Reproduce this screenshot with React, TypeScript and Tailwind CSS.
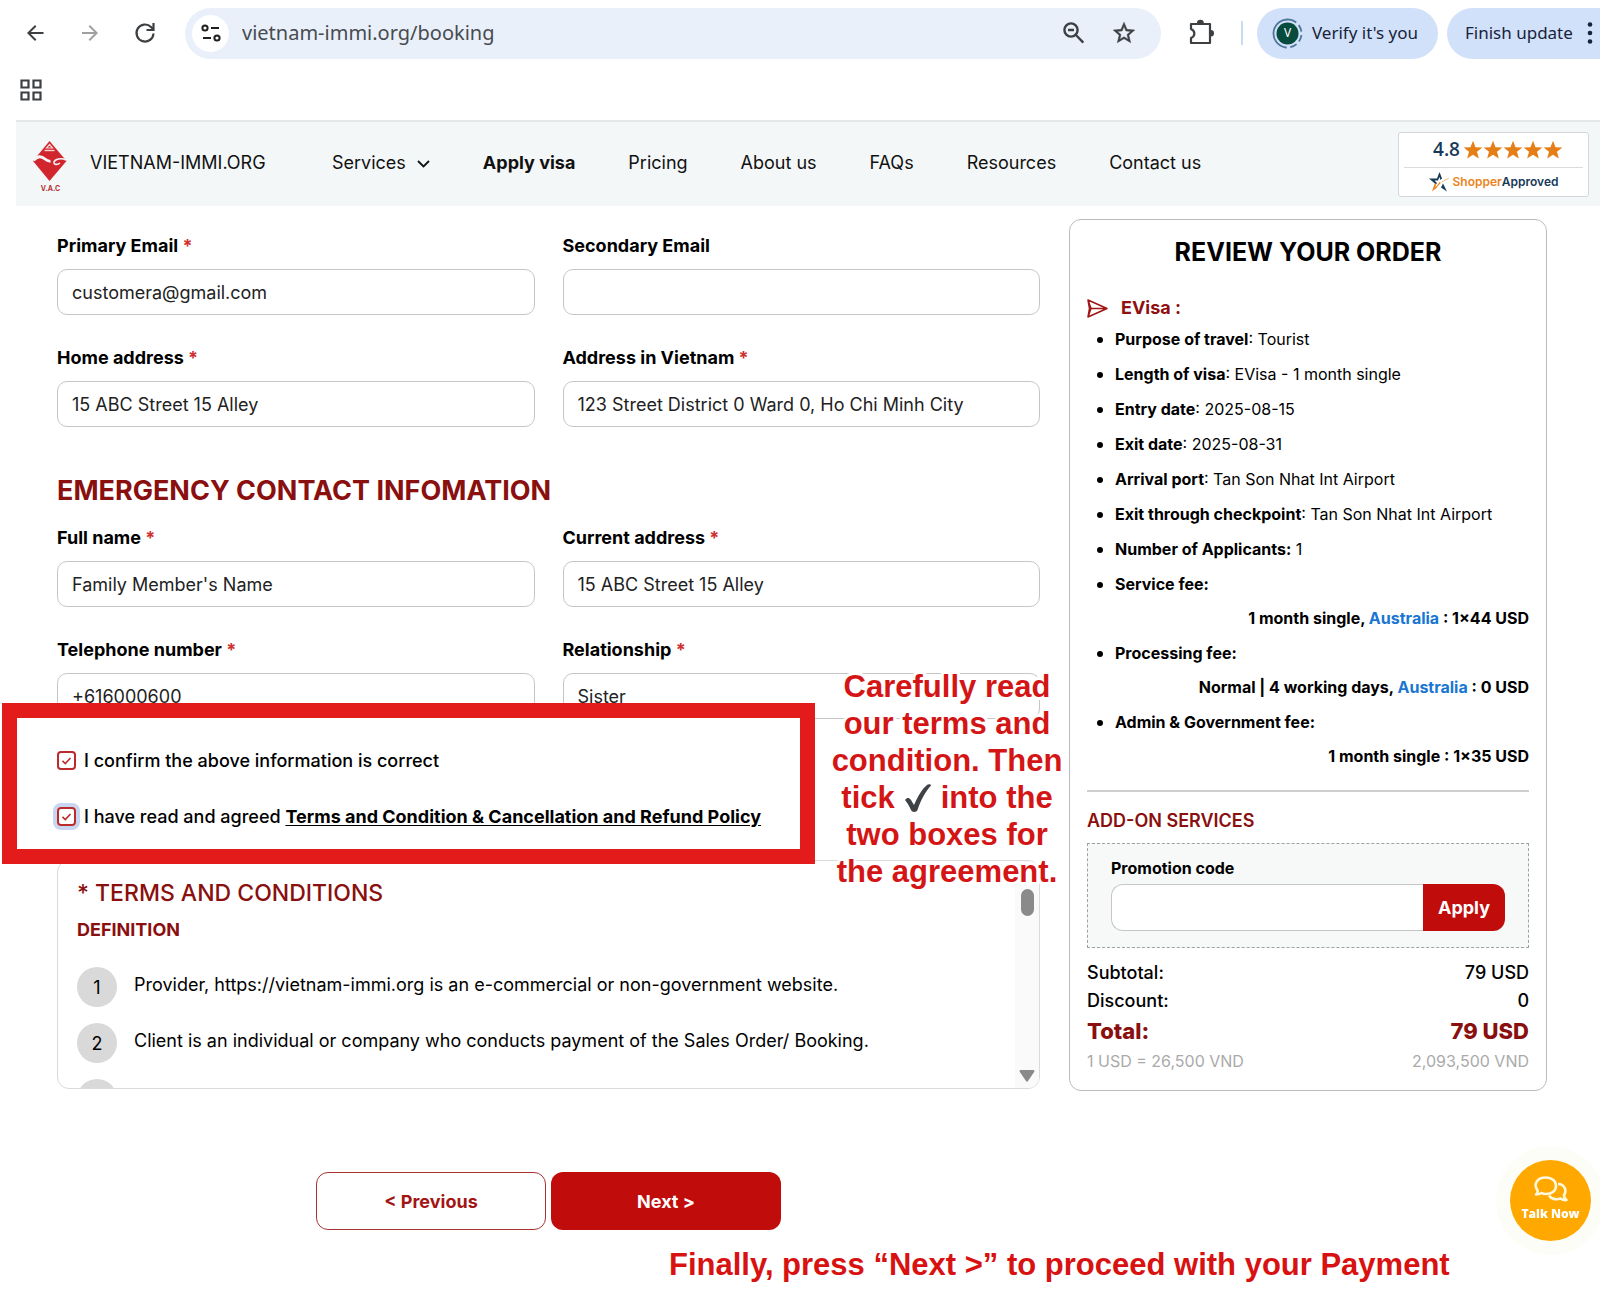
import React from 'react';

const sans = "font-['Inter','Liberation_Sans',sans-serif]";
const starPoints = '12,1 15,8.6 23.2,9 16.8,14.2 19,22.2 12,17.6 5,22.2 7.2,14.2 0.8,9 9,8.6';

function ToolbarIcon({ d, color = '#3c4043' }: { d: string; color?: string }) {
  return (
    <svg className="size-6" viewBox="0 0 24 24" fill={color} aria-hidden="true">
      <path d={d} />
    </svg>
  );
}

function BrowserBar() {
  return (
    <div className="flex h-[66px] items-center pl-[23px] font-['Noto_Sans',sans-serif]">
      <button aria-label="Back" className="mr-[31px]">
        <ToolbarIcon d="M20.500 11H7.83l5.59-5.59L12 4l-8 8 8 8 1.41-1.41L7.83 13H20.500z" />
      </button>
      <button aria-label="Forward" className="mr-[31px]">
        <ToolbarIcon color="#a0a0a0" d="M12 4l-1.41 1.41L16.17 11H4v2h12.17l-5.58 5.59L12 20l8-8z" />
      </button>
      <button aria-label="Reload" className="mr-[28px]">
        <svg className="size-6" viewBox="0 0 24 24" fill="none" stroke="#3c4043" strokeWidth="2.200" aria-hidden="true">
          <path d="M20.500 12.500a8.500 8.500 0 1 1-2.500-6.500L20.500 8.500" />
          <path d="M20.500 2v7h-7" />
        </svg>
      </button>
      <div className="flex h-[51px] flex-1 items-center rounded-full bg-[#e9f0fa] pr-[24px] pl-[7px]">
        <button aria-label="Site information" className="flex size-[37px] items-center justify-center rounded-full bg-white">
          <svg className="size-[22px]" viewBox="0 0 22 22" fill="none" stroke="#1f1f1f" strokeWidth="2" aria-hidden="true">
            <circle cx="5" cy="6" r="2.6" />
            <path d="M11 6h8M3 16h8" />
            <circle cx="17" cy="16" r="2.6" />
          </svg>
        </button>
        <input
          aria-label="Address"
          defaultValue="vietnam-immi.org/booking"
          className="ml-[13px] min-w-0 flex-1 bg-transparent text-[20px] text-[#474b50] outline-none"
        />
        <button aria-label="Zoom" className="mr-[25px]">
          <svg className="size-6" viewBox="0 0 24 24" fill="none" stroke="#3c4043" strokeWidth="2.4" aria-hidden="true">
            <circle cx="9" cy="9" r="6.6" />
            <path d="M13.900 14l7.400 7.600M6 9h6" />
          </svg>
        </button>
        <button aria-label="Bookmark">
          <svg className="size-[26px]" viewBox="0 0 24 24" fill="#3c4043" stroke="#3c4043" strokeWidth="0.400" aria-hidden="true">
            <path d="M22 9.24l-7.19-.62L12 2 9.19 8.63 2 9.24l5.46 4.73L5.82 21 12 17.27 18.18 21l-1.63-7.03L22 9.24zM12 15.4l-3.76 2.27 1-4.28-3.32-2.88 4.38-.38L12 6.1l1.71 4.04 4.38.38-3.32 2.88 1 4.28L12 15.4z" />
          </svg>
        </button>
      </div>
      <button aria-label="Extensions" className="ml-[27px]">
        <svg className="size-[28px]" viewBox="0 0 28 28" fill="none" stroke="#3c4043" strokeWidth="2.2" strokeLinejoin="round" aria-hidden="true">
          <path d="M3 5h19v19H3v-5c4.500-2 4.500-7 0-9z" />
          <path d="M9 4a3.400 3.300 0 0 1 6.800 0zM23 11a3 3.300 0 0 1 0 6.600z" fill="#3c4043" stroke="none" />
        </svg>
      </button>
      <div className="ml-[25px] h-6 w-[2px] bg-[#c9dcf5]" />
      <button className="ml-[14px] flex h-[51px] w-[181px] items-center rounded-full bg-[#d1e1f9] pl-[15px] text-[17px] text-[#17233a]">
        <span className="relative mr-[9px] flex size-[31px] items-center justify-center">
          <svg className="absolute inset-0 size-[31px]" viewBox="0 0 31 31" fill="none" aria-hidden="true">
            <circle cx="15.500" cy="15.500" r="14" stroke="#4f7699" strokeWidth="1.800" strokeDasharray="7 3.500 7 3.500 7 3.500 7 3.500 46" transform="rotate(-80 15.500 15.500)" />
            <circle cx="15.500" cy="15.500" r="11" fill="#064b3c" />
          </svg>
          <span className="relative text-[12px] text-white">V</span>
        </span>
        Verify it's you
      </button>
      <button className="ml-[9px] flex h-[51px] w-[153px] items-center rounded-l-full bg-[#d1e1f9] pl-[18px] text-[17px] whitespace-nowrap text-[#17233a]">
        Finish update
        <svg className="ml-[13px] h-6 w-[8px] shrink-0" viewBox="0 0 8 24" fill="#17233a" aria-hidden="true">
          <circle cx="4" cy="3.500" r="2.300" />
          <circle cx="4" cy="12" r="2.300" />
          <circle cx="4" cy="20.500" r="2.300" />
        </svg>
      </button>
    </div>
  );
}

function SiteNav() {
  return (
    <header className="ml-4 flex h-[86px] items-center border-t-2 border-[#e3e7e7] bg-[#f4f7f7] pr-[11px] pb-1 pl-[16px] text-[18px] text-[#111]">
      <svg className="mt-[8px] h-[52px] w-[36px]" viewBox="0 0 36 52" aria-hidden="true">
        <path d="M17.500 1L34.500 21 17.500 41 1 21z" fill="#d2262f" />
        <path d="M17.500 4.500l3 3.500h-6z" fill="none" stroke="#f6d5d6" strokeWidth="1.200" />
        <path d="M12.500 10.500h10" stroke="#f6d5d6" strokeWidth="1.400" />
        <path d="M1.500 20.500c4-5 8-4.500 11.500-1.500 2 1.800 3.500 2.500 5.500 2" fill="none" stroke="#f4f7f7" strokeWidth="2.800" />
        <path d="M34 20c-5-2.500-11-1-12 2-.5 3 3.500 3 6 1" fill="none" stroke="#f4f7f7" strokeWidth="1.600" />
        <text x="18.500" y="51" textAnchor="middle" fontSize="7" fontWeight="700" fontFamily="Inter" fill="#b5303a">V.A.C</text>
      </svg>
      <a href="#home" className="ml-[22px] w-[242px]">VIETNAM-IMMI.ORG</a>
      <nav className="flex flex-1 items-center gap-[53px]">
        <a href="#services" className="flex items-center gap-[11px]">
          Services
          <svg className="mt-1 h-[8px] w-[13px]" viewBox="0 0 13 8" fill="none" stroke="#111" strokeWidth="1.800" aria-hidden="true">
            <path d="M1 1l5.500 5.500L12 1" />
          </svg>
        </a>
        <a href="#apply" className="font-bold">Apply visa</a>
        <a href="#pricing">Pricing</a>
        <a href="#about">About us</a>
        <a href="#faqs">FAQs</a>
        <a href="#resources">Resources</a>
        <a href="#contact">Contact us</a>
      </nav>
      <div className="mt-1 flex h-[65px] w-[191px] flex-col items-center rounded-[3px] border border-[#d4d7d8] bg-white px-[5px]">
        <div className="flex h-[35px] w-full items-center justify-center border-b border-[#dcdcdc] pl-[9px]">
          <span className="mr-[3px] font-['Open_Sans',sans-serif] text-[19px] font-semibold text-[#173a58]">4.8</span>
          {[0, 1, 2, 3, 4].map((n) => (
            <svg key={n} className="size-5" viewBox="0 0 24 24" fill="#e57e16" aria-hidden="true">
              <polygon points={starPoints} />
            </svg>
          ))}
        </div>
        <div className="flex flex-1 items-center pt-px text-[12px] font-semibold text-[#ec851d]">
          <svg className="mr-[3px] h-5 w-[21px]" viewBox="0 0 21 20" aria-hidden="true">
            <path d="M0 6.500h8L10.500 0l2.500 6.500-1.500 1.500L10.500 5l-1.500 3.500H5.500L8 11l-1 1.500zM14 11.500l4 8-6-4z" fill="#173a58" />
            <path d="M21 6c-7 3-11 6-13.500 10L3 19.500 5.500 12l1.500-.5-.5 4 4.500-6 .5 2C14 8.500 17 7 21 6z" fill="#ec851d" />
          </svg>
          Shopper<span className="text-[#173a58]">Approved</span>
        </div>
      </div>
    </header>
  );
}

function Field({ id, label, value = '', required = true }: { id: string; label: string; value?: string; required?: boolean }) {
  return (
    <div className="flex flex-col gap-[11px]">
      <label htmlFor={id} className="text-[18px] leading-6 font-bold">
        {label} {required && <span className="text-[#cf3030]">*</span>}
      </label>
      <input
        id={id}
        defaultValue={value}
        className="h-[46px] w-full rounded-[10px] border border-[#c6c6c6] bg-white px-[14px] text-[18px] font-normal text-[#222] outline-none"
      />
    </div>
  );
}

function Check({ id, focused = false, children }: { id: string; focused?: boolean; children: React.ReactNode }) {
  return (
    <div className="flex h-6 items-center gap-[8px] text-[18px] font-medium">
      <span className={focused ? 'relative flex size-[19px] rounded-[4px] ring-4 ring-[#c9d6f2]' : 'relative flex size-[19px] rounded-[4px]'}>
        <input id={id} type="checkbox" defaultChecked className="size-[19px] appearance-none rounded-[4px] border-2 border-[#bb2a2d] bg-white" />
        <svg className="pointer-events-none absolute inset-0 size-[19px]" viewBox="0 0 19 19" fill="none" stroke="#bb2a2d" strokeWidth="1.600" aria-hidden="true">
          <path d="M5.500 9.800l2.800 2.700 5.200-5.500" />
        </svg>
      </span>
      <label htmlFor={id}>{children}</label>
    </div>
  );
}

function Terms() {
  return (
    <section className="flex h-[229px] overflow-hidden rounded-[12px] border border-[#dadada]">
      <div className="min-w-0 flex-1 pt-[17px] pl-[19px]">
        <h3 className="text-[23px] leading-[30px] font-medium text-[#8a0f0f]">* TERMS AND CONDITIONS</h3>
        <h4 className="mt-[10px] text-[18px] leading-6 font-bold text-[#8a0f0f]">DEFINITION</h4>
        <ol className="mt-[25px] flex flex-col gap-4 text-[18px]">
          {['Provider, https://vietnam-immi.org is an e-commercial or non-government website.', 'Client is an individual or company who conducts payment of the Sales Order/ Booking.', ''].map((text, i) => (
            <li key={i} className="flex gap-[17px]">
              <span className="flex size-10 shrink-0 items-center justify-center rounded-full bg-[#d9d9d9]">{text && i + 1}</span>
              <span className="leading-9">{text}</span>
            </li>
          ))}
        </ol>
      </div>
      <div className="flex w-[24px] flex-col items-center justify-between bg-[#fafafa] pt-[28px] pb-[6px]">
        <div className="h-[27px] w-[13px] rounded-full bg-[#8a8a8a]" />
        <svg className="h-[12px] w-[16px]" viewBox="0 0 16 12" fill="#8a8a8a" aria-hidden="true">
          <path d="M1.500 0h13q1.500 0.500 0.800 1.800L9 11q-1 1.500-2 0L0.700 1.800Q0 0.500 1.500 0z" />
        </svg>
      </div>
    </section>
  );
}

function Fee({ label, children }: { label: string; children: React.ReactNode }) {
  return (
    <li>
      <span className="font-bold">{label}</span>
      <div className="text-right font-bold">{children}</div>
    </li>
  );
}

const details = [
  ['Purpose of travel', 'Tourist'],
  ['Length of visa', 'EVisa - 1 month single'],
  ['Entry date', '2025-08-15'],
  ['Exit date', '2025-08-31'],
  ['Arrival port', 'Tan Son Nhat Int Airport'],
  ['Exit through checkpoint', 'Tan Son Nhat Int Airport'],
];

function Review() {
  return (
    <aside className="mt-[13px] rounded-[12px] border border-[#bcbcbc] px-[17px] pt-[14px] pb-[15px]">
      <h2 className="text-center text-[25px] leading-9 font-bold">REVIEW YOUR ORDER</h2>
      <h3 className="mt-[24px] flex items-center gap-[13px] text-[18px] leading-7 font-bold text-[#8f1010]">
        <svg className="h-[19px] w-[21px]" viewBox="0 0 21 19" fill="none" stroke="#a01515" strokeWidth="1.500" strokeLinejoin="round" aria-hidden="true">
          <path d="M1 1l19 8.500L1 18l1.500-8.500zM2.500 9.500H20M1 1l3 8.500L1 18" />
        </svg>
        EVisa :
      </h3>
      <ul className="list-disc space-y-px pl-[28px] text-[16px] leading-[34px] marker:text-[18px]">
        {details.map(([k, v]) => (
          <li key={k}>
            <span className="font-bold">{k}</span>: <span>{v}</span>
          </li>
        ))}
        <li>
          <span className="font-bold">Number of Applicants:</span> 1
        </li>
        <Fee label="Service fee:">
          1 month single, <span className="text-[#1976d2]">Australia</span> : 1×44 USD
        </Fee>
        <Fee label="Processing fee:">
          Normal | 4 working days, <span className="text-[#1976d2]">Australia</span> : 0 USD
        </Fee>
        <Fee label="Admin & Government fee:">1 month single : 1×35 USD</Fee>
      </ul>
      <hr className="mt-[17px] border-t-2 border-[#cfcfcf]" />
      <h3 className="mt-[15px] text-[18px] leading-7 font-semibold text-[#8a0f0f]">ADD-ON SERVICES</h3>
      <div className="mt-[8px] flex flex-col border border-dashed border-[#9da3a0] bg-[#f7f8f8] px-[23px] pt-[12px] pb-[16px]">
        <label htmlFor="promo" className="text-[16px] leading-6 font-bold">Promotion code</label>
        <div className="mt-[4px] flex h-[47px]">
          <input id="promo" className="min-w-0 flex-1 rounded-l-[12px] border border-r-0 border-[#c6c6c6] bg-white px-3 outline-none" />
          <button className="w-[82px] rounded-r-[12px] bg-[#c10c0c] text-[18px] font-bold text-white">Apply</button>
        </div>
      </div>
      <dl className="mt-[11px] grid grid-cols-2 text-[18px] leading-7 font-medium [&>dd]:text-right">
        <dt>Subtotal:</dt>
        <dd>79 USD</dd>
        <dt>Discount:</dt>
        <dd>0</dd>
        <dt className="text-[22px] leading-8 font-extrabold text-[#8a0f0f]">Total:</dt>
        <dd className="text-[22px] leading-8 font-extrabold text-[#8a0f0f]">79 USD</dd>
        <dt className="text-[16px] leading-7 font-normal text-[#aaa]">1 USD = 26,500 VND</dt>
        <dd className="text-[16px] leading-7 font-normal text-[#aaa]">2,093,500 VND</dd>
      </dl>
    </aside>
  );
}

export default function App() {
  return (
    <div className={`relative min-h-screen overflow-hidden bg-white text-black ${sans}`}>
      <BrowserBar />
      <div className="flex h-[54px] pt-[13px] pl-[20px]">
        <button aria-label="Apps" className="size-[22px]">
          <svg className="size-[22px]" viewBox="0 0 22 22" fill="none" stroke="#3c4043" strokeWidth="2.200" aria-hidden="true">
            <path d="M1.500 1.500h7v7h-7zM13.500 1.500h7v7h-7zM1.500 13.500h7v7h-7zM13.500 13.500h7v7h-7z" />
          </svg>
        </button>
      </div>
      <SiteNav />
      <div className="grid grid-cols-[minmax(0,1fr)_478px] items-start gap-[29px] pr-[53px] pl-[57px]">
        <main className="relative pt-[28px]">
          <form>
            <div className="grid grid-cols-2 gap-x-[28px] gap-y-[31px]">
              <Field id="email" label="Primary Email" value="customera@gmail.com" />
              <Field id="email2" label="Secondary Email" required={false} />
              <Field id="home" label="Home address" value="15 ABC Street 15 Alley" />
              <Field id="vn" label="Address in Vietnam" value="123 Street District 0 Ward 0, Ho Chi Minh City" />
            </div>
            <h2 className="mt-[46px] text-[27px] leading-9 font-bold text-[#8a0f0f]">EMERGENCY CONTACT INFOMATION</h2>
            <div className="mt-[17px] grid grid-cols-2 gap-x-[28px] gap-y-[31px]">
              <Field id="name" label="Full name" value="Family Member's Name" />
              <Field id="addr" label="Current address" value="15 ABC Street 15 Alley" />
              <Field id="tel" label="Telephone number" value="+616000600" />
              <Field id="rel" label="Relationship" value="Sister" />
            </div>
            <div className="relative z-10 -mt-[16px] -ml-[55px] flex h-[161px] w-[813px] flex-col gap-8 border-[15px] border-[#e31b1b] bg-white pt-[30px] pl-[40px]">
              <Check id="confirm">I confirm the above information is correct</Check>
              <Check id="agree" focused>
                I have read and agreed{' '}
                <a href="#terms" className="font-bold underline underline-offset-2">
                  Terms and Condition &amp; Cancellation and Refund Policy
                </a>
              </Check>
            </div>
            <div className="-mt-[4px]">
              <Terms />
            </div>
            <div className="mt-[83px] flex justify-center gap-[5px] text-[18px] font-bold">
              <button type="button" className="h-[58px] w-[230px] rounded-[12px] border border-[#a33] text-[#a31515]">&lt; Previous</button>
              <button type="button" className="h-[58px] w-[230px] rounded-[12px] bg-[#c10c0c] text-white">Next &gt;</button>
            </div>
          </form>
          <p className="absolute top-[462px] -right-[25px] z-20 flex w-[236px] flex-col items-center font-['Liberation_Sans',sans-serif] text-[31px] leading-[37px] font-bold whitespace-nowrap text-[#d41515] [paint-order:stroke] [-webkit-text-stroke:6px_white]">
            <span>Carefully read</span>
            <span>our terms and</span>
            <span>condition. Then</span>
            <span className="flex items-center gap-[9px]">
              tick
              <svg className="size-[28px]" viewBox="0 0 28 28" fill="#3f4245" aria-label="check mark">
                <path d="M1 16c2-3 4.500-2.500 6 0l3 5C14 12 18 5 23 1c1-1 4-1 4 .5C21 8 17 16 13.500 26c-1 2.500-5.500 2.500-6.500 0C5 21.500 3.500 19 1 16z" />
              </svg>
              into the
            </span>
            <span>two boxes for</span>
            <span>the agreement.</span>
          </p>
        </main>
        <Review />
      </div>
      <p className="mt-[15px] pl-[669px] font-['Liberation_Sans',sans-serif] text-[31px] leading-[40px] font-bold text-[#d81111]">
        Finally, press “Next &gt;” to proceed with your Payment
      </p>
      <button className="fixed right-[9px] bottom-[68px] flex size-[81px] flex-col items-center justify-center rounded-full bg-[#ffa800] pb-[4px] font-['Open_Sans',sans-serif] text-[12px] leading-4 font-extrabold text-white shadow-[0_0_0_14px_#fdfdf8]">
        <svg className="mb-[3px] h-[27px] w-[36px]" viewBox="0 0 36 27" fill="none" stroke="#fff8dc" strokeWidth="2.600" strokeLinejoin="round" aria-hidden="true">
          <path d="M3 18.500c1.500-1.200 2-2.500 1.500-4C-.5 7 5.500 1.500 12.500 1.500S23 5.500 23 10s-4 8-10 8c-2 0-3.500-.5-4.500-1-1.500 1-3.500 1.500-5.500 1.500z" />
          <path d="M25 8c6 0 9.500 6 6 11 0 2 1 4 2.500 5-2.500.5-4.500-.5-6-1.500-4.500 1.500-9.500.5-11.500-3" />
        </svg>
        Talk Now
      </button>
    </div>
  );
}
